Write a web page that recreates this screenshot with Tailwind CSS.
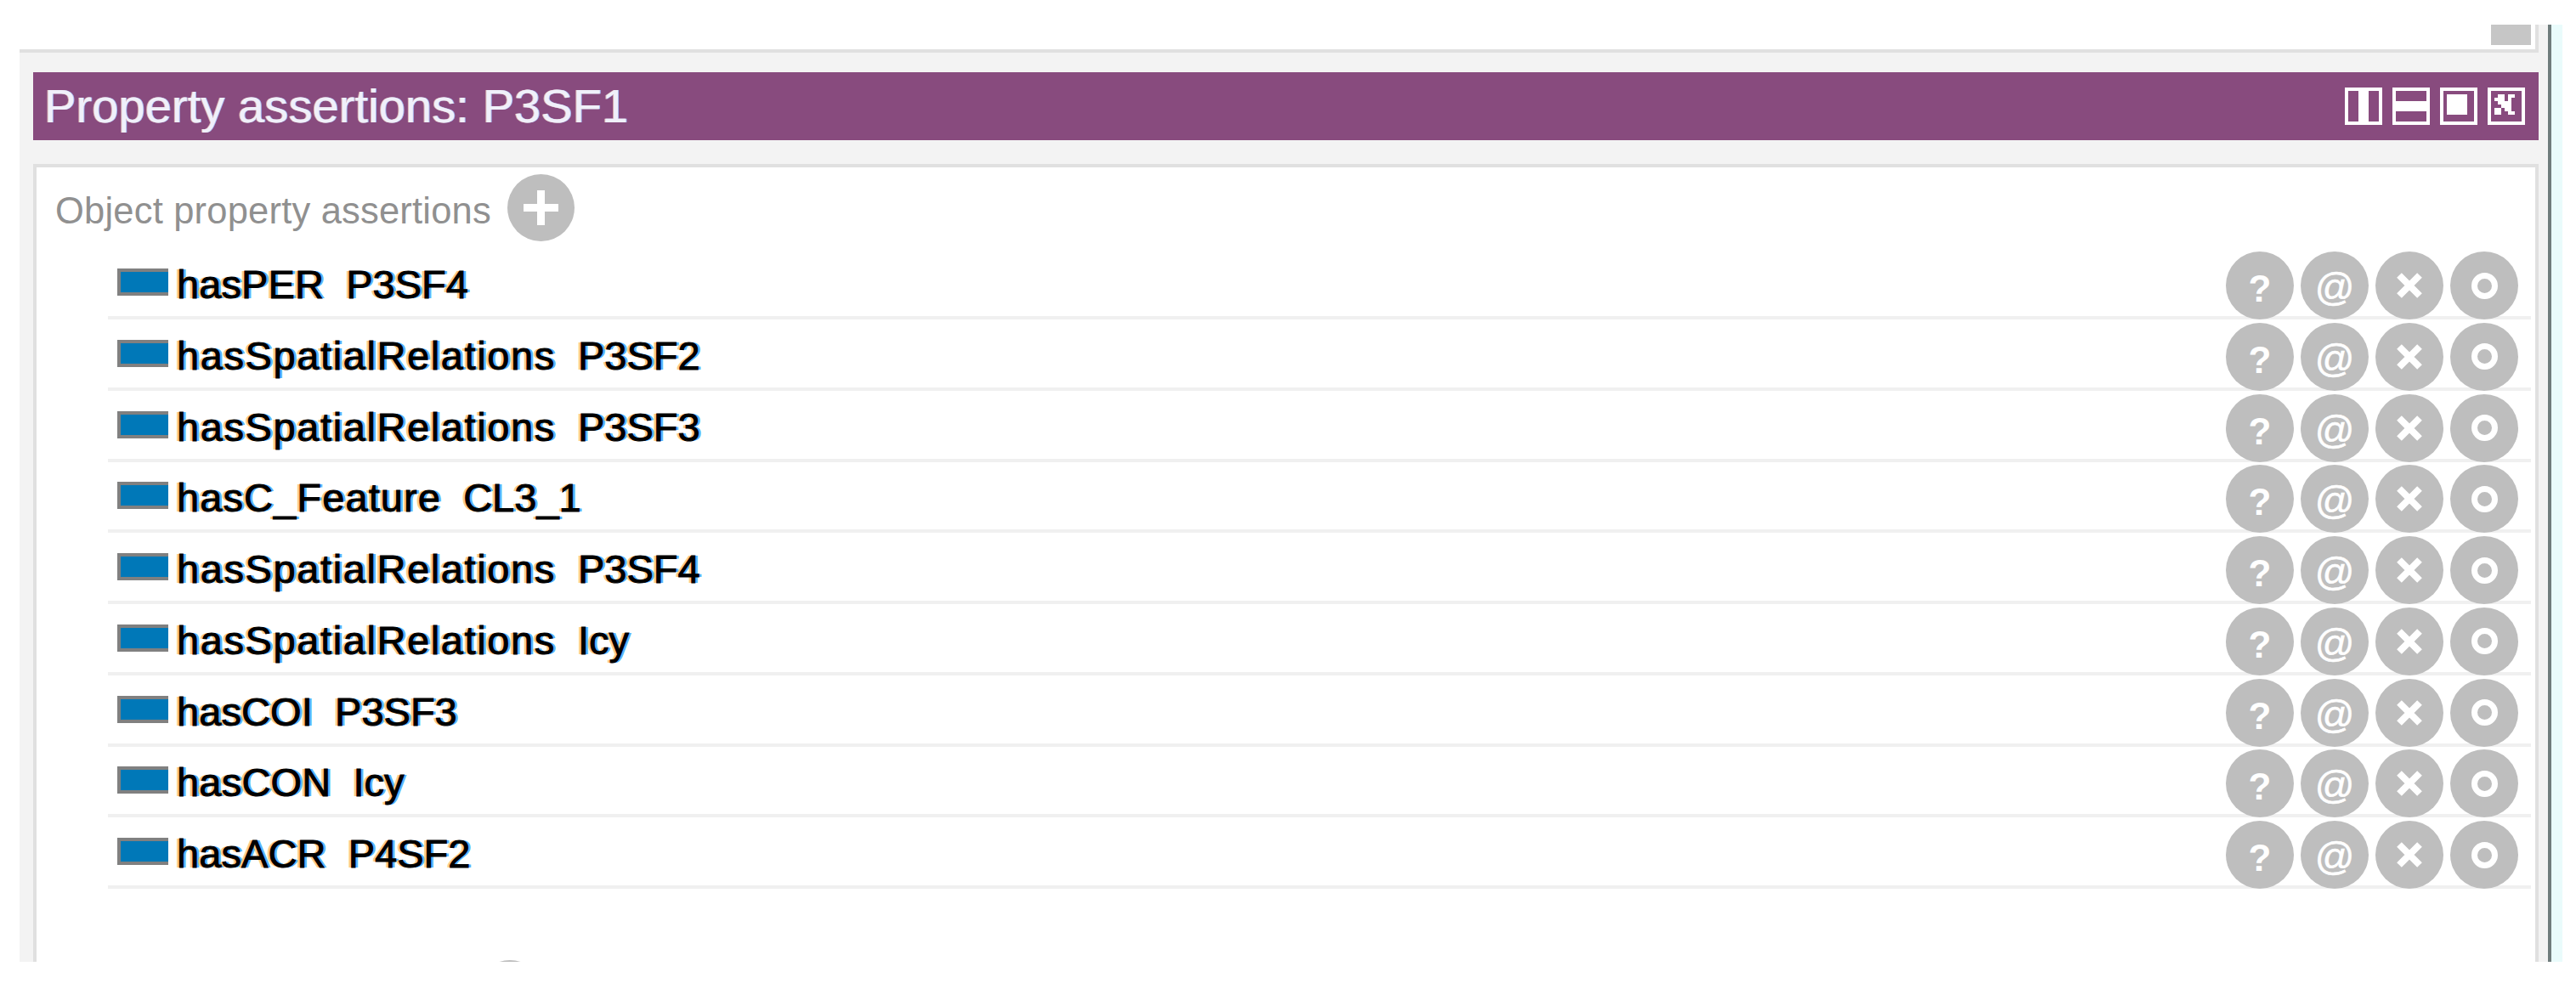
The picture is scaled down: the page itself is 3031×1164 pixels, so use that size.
<!DOCTYPE html>
<html lang="en">

<head>
    <meta charset="utf-8" />
    <title>Property assertions</title>
    <script src="https://cdn.jsdelivr.net/npm/@tailwindcss/browser@4"></script>
</head>

<body class="bg-white font-['Liberation_Sans',Arial,sans-serif]">
    <div class="h-[1164px] pt-[29px] pl-[23px] pr-[16px] overflow-hidden">
        <div class="flex h-[1103px]">
            <div class="flex-1 bg-[#f3f3f3] flex flex-col">
                <!-- top view, cut off by the crop -->
                <div class="h-[33px] mr-[11px] bg-white border-b-4 border-r-4 border-[#e0e0e0] flex justify-end pr-[5px]">
                    <div class="w-[47px] h-[24px] bg-[#c6c6c6]"></div>
                </div>

                <!-- title bar -->
                <div class="h-[80px] mt-[23px] ml-[16px] mr-[11px] bg-[#884b7e] flex items-center justify-between pl-[13px] pr-[16px]">
                    <span class="text-[56px] leading-none tracking-[0.1px] text-[#f0f0fa] [text-shadow:-1px_0_#d8b0b0,1px_0_#a8b8f0]">Property assertions: P3SF1</span>
                    <div class="flex gap-[12px]">
                        <svg class="w-[44px] h-[44px]" viewBox="0 0 11 11" shape-rendering="crispEdges" fill="#fff">
                            <path fill-rule="evenodd" d="M0 0h11v11H0zM1 1v9h3V1zM7 1v9h3V1z" />
                        </svg>
                        <svg class="w-[44px] h-[44px]" viewBox="0 0 11 11" shape-rendering="crispEdges" fill="#fff">
                            <path fill-rule="evenodd" d="M0 0h11v11H0zM1 1v3h9V1zM1 7v3h9V7z" />
                        </svg>
                        <svg class="w-[44px] h-[44px]" viewBox="0 0 11 11" shape-rendering="crispEdges" fill="#fff">
                            <path fill-rule="evenodd" d="M0 0h11v11H0zM1 1v9h9V1z" />
                            <path d="M2 2h6v6H2z" />
                        </svg>
                        <svg class="w-[44px] h-[44px]" viewBox="0 0 11 11" shape-rendering="crispEdges" fill="#fff">
                            <path fill-rule="evenodd" d="M0 0h11v11H0zM1 1v9h9V1z" />
                            <path d="M3 2h2v1H3zM6 2h2v1H6zM2 3h3v1H2zM6 3h1v1H6zM3 4h4v1H3zM4 5h3v1H4zM2 6h2v1H2zM5 6h2v1H5zM2 7h2v1H2zM6 7h2v1H6z" />
                        </svg>
                    </div>
                </div>

                <!-- assertions panel -->
                <div class="flex-1 mt-[28px] ml-[16px] mr-[11px] bg-white border-t-4 border-x-4 border-[#e0e0e0] overflow-hidden">
                    <div class="h-[95.25px] pl-[22px] flex items-start">
                        <span class="mt-[27px] text-[43.5px] leading-[48px] tracking-[0.2px] text-[#909090]">Object property assertions</span>
                        <div class="ml-[19px] mt-[8px] w-[79px] h-[79px] rounded-full bg-[#bebebe] flex items-center justify-center">
                            <svg class="w-[41px] h-[41px]" viewBox="0 0 41 41" fill="#fff">
                                <path d="M16 0h9v16h16v9H25v16h-9V25H0v-9h16z" />
                            </svg>
                        </div>
                    </div>

                    <div id="rows" class="ml-[84px] mr-[5px]"></div>

                    <!-- next section's add button, only its top edge shows -->
                    <div class="ml-[517px] mt-[84px] w-[80px] h-[80px] rounded-full bg-[#bebebe]"></div>
                </div>
            </div>

            <!-- window edge -->
            <div class="w-[4px] bg-[#6f7c7c]"></div>
            <div class="w-[13px] bg-[#e9fbfb]"></div>
        </div>
    </div>

    <script>
        // property, value, tracking of the property name
        const assertions = [
            ['hasPER', 'P3SF4', 'tracking-[0.1px]'],
            ['hasSpatialRelations', 'P3SF2', 'tracking-[1.6px]'],
            ['hasSpatialRelations', 'P3SF3', 'tracking-[1.6px]'],
            ['hasC_Feature', 'CL3_1', 'tracking-[1.1px]'],
            ['hasSpatialRelations', 'P3SF4', 'tracking-[1.6px]'],
            ['hasSpatialRelations', 'Icy', 'tracking-[1.6px]'],
            ['hasCOI', 'P3SF3', 'tracking-[0.1px]'],
            ['hasCON', 'Icy', 'tracking-[0.2px]'],
            ['hasACR', 'P4SF2', 'tracking-[0.1px]']
        ];

        const circle = 'w-[80px] h-[80px] rounded-full bg-[#bebebe] flex items-center justify-center text-white';

        document.getElementById('rows').innerHTML = assertions.map(([name, value, tracking]) => `
            <div class="h-[83.75px] box-border border-b-4 border-[#f0f0f0] flex items-center pl-[11px] pr-[15px]">
                <div class="w-[60px] h-[32px] bg-[#0078b8] border-y-4 border-l-4 border-[#808080]"></div>
                <span class="ml-[10px] mt-[5px] flex-1 whitespace-pre text-[47px] leading-none text-black [-webkit-text-stroke:1px_black] [text-shadow:-3px_0_#ffc98a,3px_0_#5ab4ff]"><span class="${tracking}">${name}</span>  ${value}</span>
                <div class="self-end -mb-1 flex gap-[8px]">
                    <div class="${circle} pt-[8px] font-bold text-[44px] leading-none">?</div>
                    <div class="${circle} pt-[4px] text-[46px] leading-none [-webkit-text-stroke:0.6px_white]">@</div>
                    <div class="${circle}">
                        <svg class="w-[30px] h-[30px]" viewBox="0 0 30 30" stroke="#fff" stroke-width="8">
                            <path d="M3 3l24 24M27 3L3 27" />
                        </svg>
                    </div>
                    <div class="${circle}">
                        <div class="w-[31px] h-[31px] rounded-full border-[7px] border-white"></div>
                    </div>
                </div>
            </div>`).join('');
    </script>
</body>

</html>
